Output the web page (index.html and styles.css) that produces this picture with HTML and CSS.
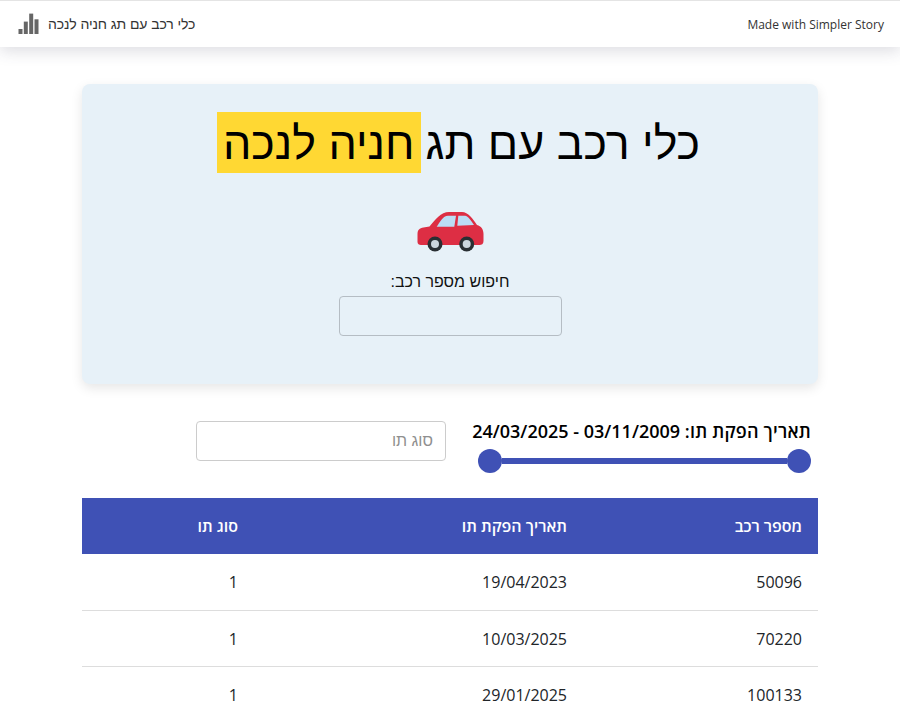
FILE: index.html
```html
<!DOCTYPE html>
<html lang="he" dir="rtl">
<head>
    <meta charset="UTF-8">
    <meta name="viewport" content="width=device-width, initial-scale=1.0">
    <title>כלי רכב עם תג חניה לנכה</title>
    <link rel="stylesheet" href="styles.css">
</head>
<body>

<nav class="topbar" dir="ltr">
    <div class="brand">
        <svg class="brand-icon" width="21" height="22" viewBox="0 0 21 22">
            <rect x="0.5" y="16" width="4" height="5"/>
            <rect x="5.8" y="8.6" width="4" height="12.4"/>
            <rect x="11.2" y="0.6" width="4" height="20.4"/>
            <rect x="16.5" y="6.3" width="4" height="14.7"/>
        </svg>
        <span class="brand-name he" dir="rtl">כלי רכב עם תג חניה לנכה</span>
    </div>
    <span class="made-with">Made with Simpler Story</span>
</nav>

<main class="container">
    <section class="hero">
        <h1 class="hero-title he">כלי רכב עם תג<mark class="highlight">חניה לנכה</mark></h1>
        <svg class="car" width="70" height="46" viewBox="0 0 70 46">
            <path fill="#dd2e44" d="M2.5 36V28c0-4 2-6 6-6.5l6-1C20 14 26 6 34 6h13c6 0 11 7 15 13 4 1 6.5 4 6.5 9v7c0 3-2 4-4 4H6c-2 0-3.5-1-3.5-3z"/>
            <path fill="#bbddf5" d="M21.7 20.7C25 16 28 9.7 33 9.7h8l-1.7 11zM43.3 9.7H50c3 0 7 6 9 9.3l-16.7 0.7z"/>
            <circle cx="20" cy="38" r="7.5" fill="#292f33"/>
            <circle cx="20" cy="38" r="4" fill="#ccd6dd"/>
            <circle cx="51.7" cy="38" r="7.5" fill="#292f33"/>
            <circle cx="51.7" cy="38" r="4" fill="#ccd6dd"/>
        </svg>
        <label class="search-label he" for="car-search">חיפוש מספר רכב:</label>
        <input class="search-input" id="car-search" type="text">
    </section>

    <section class="filters">
        <div class="date-filter">
            <div class="date-label"><span class="date-prefix">תאריך הפקת תו:</span> 03/11/2009 - 24/03/2025</div>
            <div class="slider">
                <span class="thumb"></span>
                <span class="track"></span>
                <span class="thumb"></span>
            </div>
        </div>
        <input class="type-input he" type="text" placeholder="סוג תו">
    </section>

    <table class="results">
        <thead>
            <tr>
                <th>מספר רכב</th>
                <th>תאריך הפקת תו</th>
                <th>סוג תו</th>
            </tr>
        </thead>
        <tbody>
            <tr><td>50096</td><td>19/04/2023</td><td>1</td></tr>
            <tr><td>70220</td><td>10/03/2025</td><td>1</td></tr>
            <tr><td>100133</td><td>29/01/2025</td><td>1</td></tr>
        </tbody>
    </table>
</main>

</body>
</html>
```

FILE: styles.css
```css
/* Global Styles */
html, body {
    height: 720px;
    overflow: hidden;
}

body {
    font-family: 'Open Sans', 'Noto Sans', sans-serif;
    background-color: #fff;
    color: #212529;
    margin: 0;
    font-size: 16px;
}

/* Hebrew text */
.he {
    font-family: 'Liberation Sans', Arial, sans-serif;
}

/* Top bar */
.topbar {
    height: 46px;
    border-top: 1px solid #e4e4e4;
    display: flex;
    align-items: center;
    justify-content: space-between;
    padding: 0 16px 0 18px;
    background-color: #fff;
    box-shadow: 0 4px 16px rgba(60, 60, 90, 0.18);
}

.brand {
    display: flex;
    align-items: center;
    gap: 9px;
}

.brand-icon {
    fill: #666;
}

.brand-name {
    font-size: 14px;
    letter-spacing: -0.1px;
    color: #333;
}

.made-with {
    font-size: 12px;
    color: #333;
}

/* Container */
.container {
    width: 736px;
    margin: 37px auto 0;
}

/* Hero */
.hero {
    height: 300px;
    box-sizing: border-box;
    padding-top: 28px;
    background-color: #e7f1f8;
    border-radius: 8px;
    box-shadow: 0 4px 12px rgba(0, 0, 0, 0.1);
    display: flex;
    flex-direction: column;
    align-items: center;
}

.hero-title {
    margin: 0;
    padding-left: 17px;
    font-size: 44.8px;
    font-weight: 400;
    line-height: 59px;
    color: #000;
}

.highlight {
    display: inline-block;
    margin-right: 5px;
    padding: 2px 6px 0;
    background-color: #ffd833;
    color: #000;
}

.car {
    margin-top: 33px;
}

.search-label {
    margin-top: 19px;
    font-size: 16px;
    line-height: 22px;
    color: #111;
}

.search-input {
    width: 223px;
    height: 40px;
    box-sizing: border-box;
    margin-top: 3px;
    background: transparent;
    border: 1px solid #b5bdc4;
    border-radius: 4px;
}

/* Filters */
.filters {
    display: flex;
    align-items: flex-start;
    gap: 32px;
    margin-top: 37px;
    padding: 0 7px;
}

.date-filter {
    width: 333px;
    margin-top: -2px;
}

.date-label {
    font-size: 18px;
    font-weight: 600;
    line-height: 24px;
    color: #000;
    white-space: nowrap;
}

.date-prefix {
    letter-spacing: 0.2px;
}

.slider {
    display: flex;
    align-items: center;
    margin-top: 6px;
}

.thumb {
    width: 24px;
    height: 24px;
    border-radius: 50%;
    background-color: #3f51b5;
    flex: none;
}

.track {
    flex: 1;
    height: 6px;
    background-color: #3f51b5;
}

.type-input {
    width: 250px;
    height: 40px;
    box-sizing: border-box;
    padding: 0 12px;
    font-size: 16px;
    border: 1px solid #ccc;
    border-radius: 4px;
}

.type-input::placeholder {
    color: #8f8f8f;
}

/* Table */
.results {
    width: 100%;
    margin-top: 25px;
    border-collapse: collapse;
    table-layout: fixed;
    font-size: 16px;
}

.results th {
    height: 56px;
    padding: 0 16px;
    text-align: right;
    font-weight: 600;
    color: #fff;
    background-color: #3f51b5;
}

.results th:nth-child(1) { width: 203px; }
.results th:nth-child(2) { width: 297px; }

.results tbody tr {
    height: 56px;
}

.results td {
    box-sizing: border-box;
    height: 56px;
    padding: 1px 16px 0;
    border-bottom: 1px solid #ddd;
}
```
